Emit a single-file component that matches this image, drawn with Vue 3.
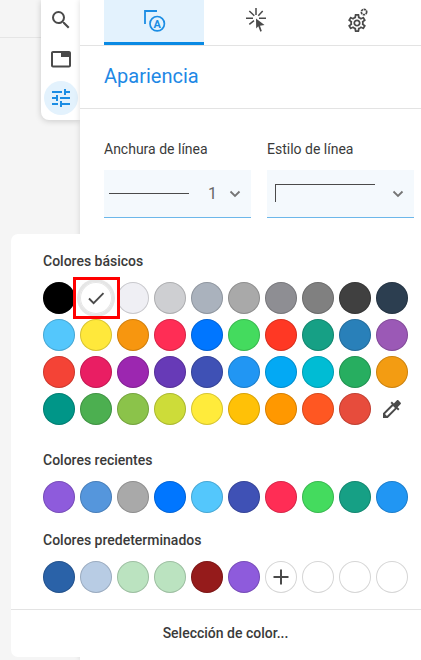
<script setup>
const basicColors = [
  '#000000', '#ffffff', '#efeff4', '#cecfd2', '#aab2bd', '#a9a9a9', '#8e8e93', '#808080', '#404040', '#2c3e50',
  '#54c7fc', '#ffe83b', '#f7960f', '#ff2d55', '#0076ff', '#44db5e', '#ff3824', '#16a085', '#2980b9', '#9b59b6',
  '#f44336', '#e91e63', '#9c27b0', '#673ab7', '#3f51b5', '#2196f3', '#03a9f4', '#00bcd4', '#27ae60', '#f39c12',
  '#009688', '#4caf50', '#8bc34a', '#cddc39', '#ffeb3b', '#ffc107', '#ff9800', '#ff5722', '#e74c3c'
]
const recentColors = ['#8e5bdc', '#5596dc', '#a9a9a9', '#0076ff', '#54c7fc', '#3f51b5', '#ff2d55', '#44db5e', '#16a085', '#2196f3']
const defaultColors = ['#2a62a8', '#b8cce4', '#bbe3c0', '#bbe3c0', '#951b1b', '#8e5bdc']
</script>

<template>
  <div class="page">
    <div class="backdrop"><div class="backdrop-line"></div></div>

    <div class="toolbar">
      <button class="tool">
        <svg viewBox="0 0 24 24" width="24" height="24"><path d="M15.5 14h-.79l-.28-.27A6.47 6.47 0 0 0 16 9.5 6.5 6.5 0 1 0 9.5 16c1.61 0 3.09-.59 4.23-1.57l.27.28v.79l5 4.99L20.49 19l-4.99-5zm-6 0C7.01 14 5 11.99 5 9.5S7.01 5 9.5 5 14 7.01 14 9.5 11.99 14 9.5 14z" /></svg>
      </button>
      <button class="tool">
        <svg viewBox="0 0 24 24" width="24" height="24"><path d="M4 4h16c1.1 0 2 .9 2 2v12.500c0 1.100-.9 2-2 2H4c-1.100 0-2-.9-2-2V6c0-1.100.9-2 2-2zm0 2v12.500h16V10h-8V6H4z" /></svg>
      </button>
      <button class="tool active">
        <svg viewBox="0 0 24 24" width="24" height="24"><path d="M3 17v2h6v-2H3zM3 5v2h10V5H3zm10 16v-2h8v-2h-8v-2h-2v6h2zM7 9v2H3v2h4v2h2V9H7zm14 4v-2H11v2h10zm-6-4h2V7h4V5h-4V3h-2v6z" /></svg>
      </button>
    </div>

    <div class="panel">
      <div class="tabs">
        <div class="tab selected">
          <svg class="tab-icon" viewBox="0 0 24 24" width="24" height="24">
            <path d="M3 15V2h12" fill="none" stroke="#1b8de4" stroke-width="1.800" />
            <circle cx="15.200" cy="14.700" r="7.200" fill="#e3f2fd" stroke="#1b8de4" stroke-width="1.700" />
            <text x="15.200" y="18.600" text-anchor="middle" class="tab-a">A</text>
          </svg>
        </div>
        <div class="tab">
          <svg class="tab-icon" viewBox="0 0 28 28" width="28" height="28">
            <path d="M14 11.500l.2 10 2.100-2.200 2 5.400 1.500-.7-1.800-5.200 4.500-.8z" />
            <path d="M14 1v7M4 11.300h7M17 11.300h7M7.300 4l5 4.700M20.700 4l-4.400 4.700M7.300 17.300l4.700-3.600" fill="none" stroke="#4a4a4a" stroke-width="1.500" />
          </svg>
        </div>
        <div class="tab">
          <svg class="tab-icon" viewBox="0 0 28 28" width="28" height="28">
            <g transform="translate(2.200 5.200) scale(.9)"><path d="M19.430 12.980c.04-.32.07-.64.07-.98 0-.34-.03-.66-.07-.98l2.110-1.650c.19-.15.24-.42.12-.64l-2-3.460c-.09-.16-.26-.25-.44-.25-.06 0-.12.01-.17.03l-2.490 1c-.52-.4-1.080-.73-1.690-.98l-.38-2.650C14.460 2.180 14.250 2 14 2h-4c-.25 0-.46.18-.49.42l-.38 2.650c-.61.25-1.170.59-1.690.98l-2.490-1c-.06-.02-.12-.03-.18-.03-.17 0-.34.09-.43.25l-2 3.460c-.13.22-.07.49.12.64l2.110 1.650c-.04.32-.07.65-.07.98 0 .33.03.66.07.98l-2.110 1.650c-.19.15-.24.42-.12.64l2 3.460c.09.16.26.25.44.25.06 0 .12-.01.17-.03l2.490-1c.52.4 1.080.73 1.690.98l.38 2.650c.03.24.24.42.49.42h4c.25 0 .46-.18.49-.42l.38-2.650c.61-.25 1.170-.59 1.690-.98l2.490 1c.06.02.12.03.18.03.17 0 .34-.09.43-.25l2-3.460c.12-.22.07-.49-.12-.64l-2.110-1.650zm-1.980-1.710c.04.31.05.52.05.73 0 .21-.02.43-.05.73l-.14 1.130.89.7 1.080.84-.7 1.210-1.270-.51-1.040-.42-.9.68c-.43.32-.84.56-1.250.73l-1.060.43-.16 1.130-.2 1.350h-1.400l-.19-1.350-.16-1.130-1.060-.43c-.43-.18-.83-.41-1.230-.71l-.91-.7-1.060.43-1.270.51-.7-1.210 1.080-.84.89-.7-.14-1.130c-.03-.31-.05-.54-.05-.74s.02-.43.05-.73l.14-1.130-.89-.7-1.080-.84.7-1.210 1.270.51 1.040.42.9-.68c.43-.32.84-.56 1.250-.73l1.060-.43.16-1.130.2-1.350h1.390l.19 1.350.16 1.130 1.060.43c.43.18.83.41 1.230.71l.91.7 1.060-.43 1.270-.51.7 1.210-1.070.85-.89.7.14 1.130zM12 8c-2.210 0-4 1.790-4 4s1.790 4 4 4 4-1.790 4-4-1.790-4-4-4zm0 6c-1.100 0-2-.9-2-2s.9-2 2-2 2 .9 2 2-.9 2-2 2z" /></g>
            <circle cx="20" cy="5" r="2.700" fill="none" stroke="#4a4a4a" stroke-width="1.700" stroke-dasharray="2.400 .6" />
          </svg>
        </div>
      </div>

      <h2 class="panel-title">Apariencia</h2>

      <div class="fields">
        <div class="field">
          <label>Anchura de línea</label>
          <div class="select">
            <span class="line-sample"></span>
            <span class="select-value">1</span>
            <svg class="chevron" viewBox="0 0 12 8" width="12" height="8"><path d="M1.500 1.500L6 6l4.500-4.500" /></svg>
          </div>
        </div>
        <div class="field">
          <label>Estilo de línea</label>
          <div class="select style-select">
            <span class="corner-sample"></span>
            <svg class="chevron" viewBox="0 0 12 8" width="12" height="8"><path d="M1.500 1.500L6 6l4.500-4.500" /></svg>
          </div>
        </div>
      </div>
      <div class="fields-divider"></div>
    </div>

    <!-- selector de color encima del panel -->
    <div class="popup">
      <section class="group">
        <h3>Colores básicos</h3>
        <div class="swatches">
          <template v-for="(color, i) in basicColors" :key="i">
            <div v-if="i === 1" class="swatch picked">
              <svg viewBox="0 0 24 24" width="24" height="24"><path d="M5 12.500l4.600 4.600L19.500 7.200" /></svg>
            </div>
            <div v-else class="swatch" :style="{ background: color }"></div>
          </template>
          <div class="dropper">
            <svg viewBox="0 0 24 24" width="24" height="24"><path d="M20.710 5.630l-2.340-2.340c-.39-.39-1.020-.39-1.410 0l-3.120 3.120-1.930-1.910-1.410 1.410 1.420 1.420L3 16.250V21h4.750l8.920-8.920 1.420 1.420 1.410-1.410-1.920-1.920 3.120-3.120c.4-.4.4-1.030.01-1.420zM6.920 19L5 17.080l8.060-8.060 1.920 1.920L6.920 19z" /></svg>
          </div>
          <div class="red-mark"></div>
        </div>
      </section>

      <section class="group recent">
        <h3>Colores recientes</h3>
        <div class="swatches">
          <div v-for="(color, i) in recentColors" :key="i" class="swatch" :style="{ background: color }"></div>
        </div>
      </section>

      <section class="group predefined">
        <h3>Colores predeterminados</h3>
        <div class="swatches">
          <div v-for="(color, i) in defaultColors" :key="i" class="swatch" :style="{ background: color }"></div>
          <div class="swatch empty add">
            <svg viewBox="0 0 18 18" width="18" height="18"><path d="M9 1.500v15M1.500 9h15" /></svg>
          </div>
          <div v-for="n in 3" :key="n" class="swatch empty"></div>
        </div>
      </section>

      <div class="popup-footer">Selección de color...</div>
    </div>
  </div>
</template>

<style>
html,
body {
  margin: 0;
  background: #f5f5f5;
}
</style>

<style scoped>
* {
  box-sizing: border-box;
  font-family: Roboto, "Liberation Sans", sans-serif;
}

.page {
  position: relative;
  display: flex;
  width: 421px;
  height: 660px;
  overflow: hidden;
  background: #f5f5f5;
}

.backdrop {
  width: 41px;
  flex-shrink: 0;
  padding-top: 37px;
}

.backdrop-line {
  height: 1px;
  background: #e5e5e5;
}

.toolbar {
  display: flex;
  flex-direction: column;
  width: 39px;
  height: 120px;
  flex-shrink: 0;
  background: #fff;
  border-radius: 0 0 0 8px;
  box-shadow: 0 1px 6px rgba(0, 0, 0, 0.18);
}

.tool {
  display: flex;
  align-items: center;
  justify-content: center;
  width: 39px;
  height: 39px;
  padding: 0;
  border: none;
  background: none;
}

.tool svg {
  fill: #4a4a4a;
}

.tool.active {
  position: relative;
}

.tool.active::before {
  content: "";
  position: absolute;
  left: 3px;
  top: 3px;
  width: 34px;
  height: 34px;
  border-radius: 50%;
  background: #e3f2fd;
}

.tool.active svg {
  position: relative;
  fill: #1b8de4;
}

.panel {
  position: relative;
  flex: 1;
  padding: 0 7px 0 24px;
  background: #fff;
  box-shadow: 0 0 6px rgba(0, 0, 0, 0.14);
}

.tabs {
  display: flex;
  gap: 2px;
  height: 46px;
  margin: 0 -7px 0 -24px;
  padding-left: 24px;
  border-bottom: 1px solid #e3e3e3;
}

.tab {
  display: flex;
  align-items: center;
  justify-content: center;
  width: 100px;
  height: 45px;
  padding-bottom: 3px;
}

.tab.selected {
  background: #e3f2fd;
  border-bottom: 3px solid #0a8ae4;
  padding-bottom: 0;
}

.tab-icon {
  fill: #4a4a4a;
}

.tab-a {
  font-size: 11px;
  font-weight: 700;
  fill: #1b8de4;
}

.panel-title {
  height: 63px;
  margin: 0 -7px 0 -24px;
  padding-left: 24px;
  border-bottom: 1px solid #e3e3e3;
  color: #1e88e5;
  font-size: 20px;
  font-weight: 400;
  line-height: 60px;
}

.fields {
  display: flex;
  gap: 16px;
  padding-top: 29px;
}

.field {
  width: 147px;
}

.field label {
  display: block;
  height: 22px;
  color: #3a3a3a;
  font-size: 14px;
  line-height: 22px;
}

.select {
  display: flex;
  align-items: center;
  height: 48px;
  margin-top: 10px;
  padding-left: 5px;
  background: #f4f9fd;
  border-bottom: 1px solid #6cb7ea;
}

.line-sample {
  width: 80px;
  height: 1px;
  background: #4a4a4a;
}

.select-value {
  margin-left: 19px;
  color: #666;
  font-size: 16px;
}

.chevron {
  margin-left: 12px;
  fill: none;
  stroke: #757575;
  stroke-width: 1.800;
}

.style-select {
  justify-content: space-between;
  padding: 0 10px 0 8px;
}

.style-select .chevron {
  margin: 0;
}

.corner-sample {
  width: 100px;
  height: 18px;
  margin-bottom: 1px;
  border-top: 1px solid #4a4a4a;
  border-left: 1px solid #4a4a4a;
}

.fields-divider {
  height: 1px;
  margin-top: 16px;
  width: 310px;
  background: #e3e3e3;
}

.popup {
  position: absolute;
  left: 11px;
  top: 234px;
  width: 410px;
  height: 423px;
  padding-top: 17px;
  background: #fff;
  border-radius: 7px 0 0 7px;
}

.group {
  padding-left: 32px;
}

.group h3 {
  height: 20px;
  margin: 0 0 11px;
  color: #3a3a3a;
  font-size: 14px;
  font-weight: 500;
  line-height: 20px;
}

.recent {
  margin-top: 25px;
}

.predefined {
  margin-top: 17px;
}

.swatches {
  position: relative;
  display: grid;
  grid-template-columns: repeat(10, 32px);
  gap: 5px;
}

.swatch {
  width: 32px;
  height: 32px;
  border-radius: 50%;
  box-shadow: inset 0 0 0 1px rgba(0, 0, 0, 0.16);
}

.picked {
  display: flex;
  align-items: center;
  justify-content: center;
  background: #fff;
  box-shadow: 0 0 0 3px #e6e6e6, inset 0 0 0 1px #e6e6e6;
}

.picked svg {
  fill: none;
  stroke: #4a4a4a;
  stroke-width: 1.900;
}

.empty {
  background: #fff;
  box-shadow: inset 0 0 0 1px #d6d6d6;
}

.add {
  display: flex;
  align-items: center;
  justify-content: center;
}

.add svg {
  fill: none;
  stroke: #4a4a4a;
  stroke-width: 2;
}

.dropper {
  display: flex;
  align-items: center;
  justify-content: center;
  width: 32px;
  height: 32px;
}

.dropper svg {
  fill: #4a4a4a;
}

.red-mark {
  position: absolute;
  left: 30px;
  top: -5px;
  width: 47px;
  height: 42px;
  border: 3px solid #f00;
}

.popup-footer {
  height: 48px;
  margin-top: 16px;
  padding-left: 19px;
  border-top: 1px solid #e3e3e3;
  color: #3a3a3a;
  font-size: 14px;
  font-weight: 500;
  line-height: 46px;
  text-align: center;
}
</style>
